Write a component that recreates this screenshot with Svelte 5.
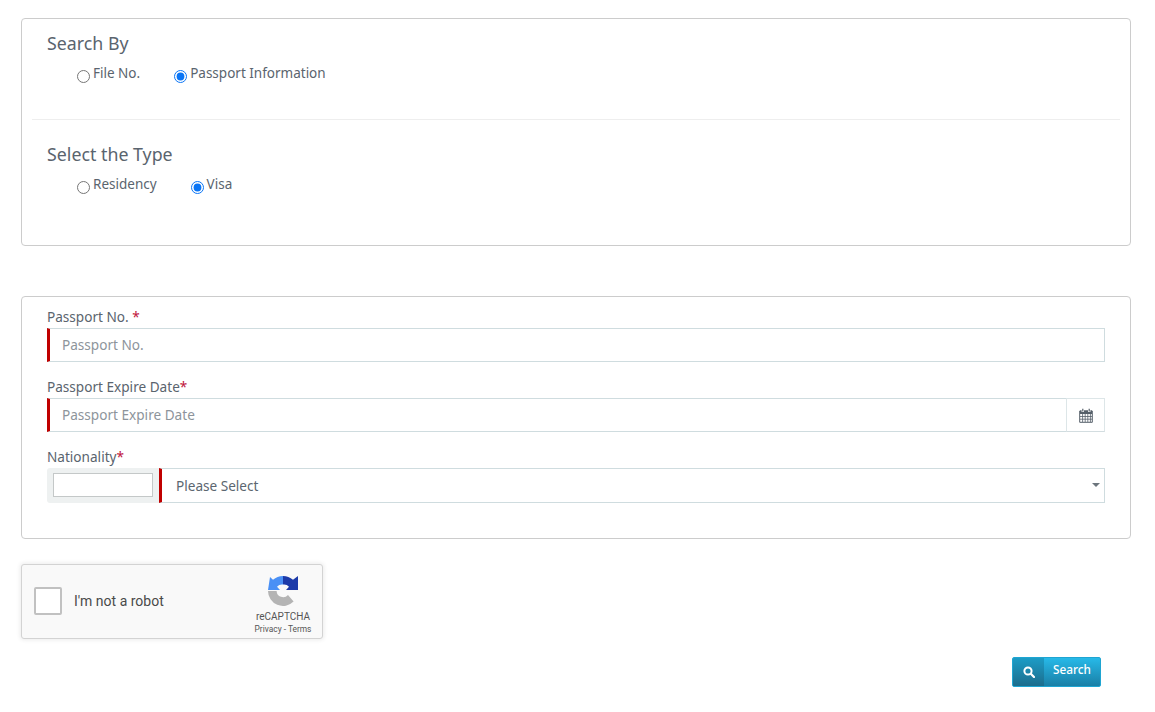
<script>
    const searchBy = ['File No.', 'Passport Information'];
    const types = ['Residency', 'Visa'];
    let by = $state('Passport Information');
    let type = $state('Visa');
</script>

<div class="page">
    <section class="card top">
        <div class="group">
            <h4>Search By</h4>
            <div class="radios">
                {#each searchBy as item}
                    <label class="radio">
                        <input type="radio" name="by" value={item} bind:group={by} />
                        <span>{item}</span>
                    </label>
                {/each}
            </div>
        </div>
        <hr />
        <div class="group">
            <h4>Select the Type</h4>
            <div class="radios">
                {#each types as item}
                    <label class="radio">
                        <input type="radio" name="type" value={item} bind:group={type} />
                        <span>{item}</span>
                    </label>
                {/each}
            </div>
        </div>
    </section>

    <section class="card form">
        <div class="field">
            <label for="pno">Passport No. <em>*</em></label>
            <input id="pno" class="control" placeholder="Passport No." />
        </div>
        <div class="field">
            <label for="pdate">Passport Expire Date<em>*</em></label>
            <div class="with-addon">
                <input id="pdate" class="control" placeholder="Passport Expire Date" />
                <span class="addon">
                    <svg width="14" height="15" viewBox="0 0 14 15" fill="none">
                        <path d="M0.7 3h12.6v11.3H0.7z" fill="#fff" stroke="#555f69" stroke-width="1" />
                        <path d="M1 2.5h12V6H1z" fill="#555f69" />
                        <path d="M1 8.5h12M1 11.2h12M3.6 6V14M6.2 6V14M8.8 6V14M11.4 6V14" stroke="#555f69" stroke-width="0.8" />
                        <path d="M3.8 0.5v3.4M10.2 0.5v3.4" stroke="#fff" stroke-width="2.4" />
                        <path d="M3.8 0.8v2.8M10.2 0.8v2.8" stroke="#555f69" stroke-width="1.2" />
                    </svg>
                </span>
            </div>
        </div>
        <div class="field">
            <label for="nat">Nationality<em>*</em></label>
            <div class="nat">
                <div class="nat-box"><input class="mini" aria-label="Filter" /></div>
                <div id="nat" class="select">Please Select<i class="caret"></i></div>
            </div>
        </div>
    </section>

    <div class="captcha">
        <span class="check"></span>
        <span class="robot">I'm not a robot</span>
        <div class="brand">
            <svg width="32" height="32" viewBox="0 0 32 32">
                <path d="M16 1 A15 15 0 0 0 6 4.8 L3 2 L1 15 H13 L10 11.8 A6.5 6.5 0 0 1 16 9.5 Z" fill="#4a90f5" />
                <path d="M16 1 A15 15 0 0 1 26 4.8 L31 1 V15 H19 L22 11.8 A6.5 6.5 0 0 0 16 9.5 Z" fill="#1c3aa9" />
                <path d="M1 16 H9.6 A6.5 6.5 0 0 0 21 20 L26.6 26.6 A15 15 0 0 1 1 16 Z" fill="#b4b4b4" />
            </svg>
            <div class="brand-name">reCAPTCHA</div>
            <div class="brand-links">Privacy - Terms</div>
        </div>
    </div>

    <div class="actions">
        <button class="search" type="button">
            <span class="search-icon">
                <svg width="12" height="12" viewBox="0 0 12 12" fill="none">
                    <circle cx="5" cy="5" r="3.6" stroke="#fff" stroke-width="2" />
                    <path d="M7.8 7.8 L11 11" stroke="#fff" stroke-width="2.2" stroke-linecap="round" />
                </svg>
            </span>
            <span class="search-label">Search</span>
        </button>
    </div>
</div>

<style>
    :global(body) {
        margin: 0;
        background: #fff;
        font-family: "Noto Sans", "Open Sans", sans-serif;
        color: #5a646e;
    }
    .page {
        padding: 18px 24px 0 21px;
    }
    .card {
        border: 1px solid #ccc;
        border-radius: 4px;
    }
    .top {
        height: 228px;
        box-sizing: border-box;
        padding: 13px 10px 0;
    }
    .group {
        padding: 0 15px;
    }
    h4 {
        margin: 0;
        font-size: 17.8px;
        line-height: 22px;
        font-weight: 400;
    }
    .radios {
        display: flex;
        padding-left: 30px;
        margin-top: 10px;
        height: 22px;
    }
    .radio {
        display: flex;
        align-items: flex-start;
        margin-right: 34px;
        font-size: 13.5px;
        line-height: 18px;
    }
    .radio input {
        width: 13px;
        height: 13px;
        margin: 6px 3px 0 0;
        accent-color: #0a75f5;
    }
    hr {
        border: 0;
        border-top: 1px solid #eee;
        margin: 33px 0 23px;
    }
    .form {
        margin-top: 50px;
        height: 243px;
        box-sizing: border-box;
        padding: 10px 25px 0;
    }
    .field {
        margin-bottom: 15px;
    }
    .field > label {
        display: block;
        font-size: 13.6px;
        line-height: 20px;
        height: 21px;
    }
    em {
        font-style: normal;
        color: #c0143c;
    }
    .control {
        display: block;
        box-sizing: border-box;
        width: 100%;
        height: 34px;
        border: 1px solid #cfdcdf;
        border-left: 3px solid #c00000;
        padding: 0 12px 2px;
        font: inherit;
        font-size: 13.6px;
        color: #5a646e;
        outline: none;
    }
    .control::placeholder {
        color: #8d949b;
        opacity: 1;
    }
    .with-addon {
        display: flex;
    }
    .with-addon .control {
        flex: 1;
        border-right: 0;
    }
    .addon {
        width: 39px;
        height: 34px;
        box-sizing: border-box;
        border: 1px solid #dde6e8;
        border-bottom-color: #d3dde0;
        display: flex;
        align-items: center;
        justify-content: center;
    }
    .nat {
        display: flex;
        height: 35px;
    }
    .nat-box {
        width: 112px;
        box-sizing: border-box;
        background: #eef1f1;
        border-radius: 3px 0 0 3px;
        padding: 5px 6px;
    }
    .mini {
        display: block;
        box-sizing: border-box;
        width: 100px;
        height: 24px;
        border: 1px solid #c4c8c8;
        background: #fff;
        padding: 0;
    }
    .select {
        flex: 1;
        position: relative;
        box-sizing: border-box;
        border: 1px solid #cfdcdf;
        border-left: 3px solid #c00000;
        padding-left: 14px;
        font-size: 13.6px;
        line-height: 33px;
        color: #5b6670;
    }
    .caret {
        position: absolute;
        right: 4px;
        top: 14px;
        border-left: 4px solid transparent;
        border-right: 4px solid transparent;
        border-top: 4px solid #6c757d;
    }
    .captcha {
        margin-top: 25px;
        width: 302px;
        height: 75px;
        box-sizing: border-box;
        display: flex;
        align-items: center;
        background: #f9f9f9;
        border: 1px solid #d3d3d3;
        border-radius: 3px;
        box-shadow: 0 0 4px 1px rgba(0, 0, 0, 0.08);
        padding: 0 0 2px 12px;
        font-family: Roboto, "Liberation Sans", sans-serif;
    }
    .check {
        width: 28px;
        height: 28px;
        box-sizing: border-box;
        border: 2px solid #c1c1c1;
        border-radius: 2px;
        background: #fff;
    }
    .robot {
        margin-left: 12px;
        font-size: 14px;
        color: #4a4a4a;
    }
    .brand {
        margin-left: auto;
        width: 70px;
        margin-right: 4px;
        align-self: flex-start;
        display: flex;
        flex-direction: column;
        align-items: center;
        color: #555;
    }
    .brand svg {
        margin-top: 10px;
    }
    .brand-name {
        font-size: 10px;
        line-height: 12px;
        margin-top: 4px;
    }
    .brand-links {
        font-size: 8.4px;
        line-height: 10px;
        margin-top: 1px;
    }
    .actions {
        display: flex;
        justify-content: flex-end;
        margin-top: 18px;
        padding-right: 30px;
    }
    .search {
        display: flex;
        width: 89px;
        height: 30px;
        padding: 0;
        border: 1px solid #1fa5d2;
        border-radius: 2px;
        overflow: hidden;
        background: linear-gradient(#27b9e8, #1a7fa6);
        color: #fff;
        font: inherit;
        font-size: 11.8px;
        font-weight: 500;
    }
    .search-icon {
        width: 31px;
        height: 100%;
        flex: none;
        display: flex;
        align-items: center;
        justify-content: center;
        background: linear-gradient(#1c9cc6, #1c6d8d);
    }
    .search-label {
        flex: 1;
        line-height: 22px;
        text-align: center;
    }
</style>
